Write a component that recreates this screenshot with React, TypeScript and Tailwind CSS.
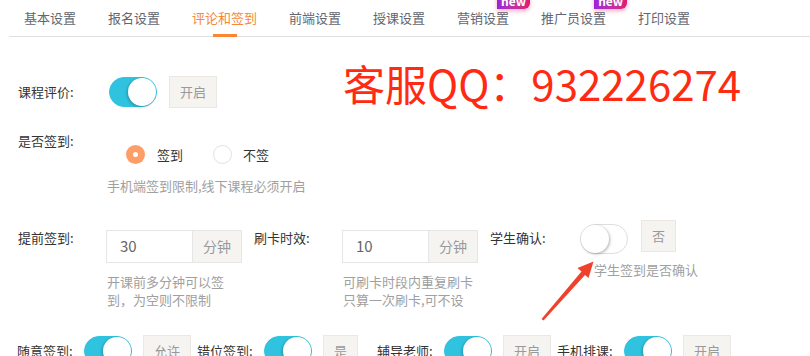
import React from "react";

const tabs = ["基本设置", "报名设置", "评论和签到", "前端设置", "授课设置", "营销设置", "推广员设置", "打印设置"];
const newTabs = ["营销设置", "推广员设置"];

function Toggle({ on }: { on: boolean }) {
  return on ? (
    <div className="relative h-[30px] w-[48px] shrink-0 rounded-full border border-[#2fc3df] bg-[#2fc3df]">
      <div className="absolute right-0 top-0 h-[28px] w-[28px] rounded-full bg-white shadow-[-1px_1px_3px_rgba(0,0,0,0.25)]" />
    </div>
  ) : (
    <div className="relative h-[30px] w-[48px] shrink-0 rounded-full border border-[#dedede] bg-white">
      <div className="absolute left-0 top-0 h-[28px] w-[28px] rounded-full bg-white shadow-[1px_1px_3px_rgba(0,0,0,0.3)]" />
    </div>
  );
}

function Box({ text }: { text: string }) {
  return (
    <div className="flex h-[32px] shrink-0 items-center justify-center border border-[#ebe7e2] bg-[#f6f4f1] px-[10px] text-[13px] text-[#999]">
      {text}
    </div>
  );
}

function MinuteInput({ value }: { value: string }) {
  return (
    <div className="flex h-[33px] w-[136px] border border-[#e6e6e6]">
      <div className="flex flex-1 items-center pl-[13px] text-[15px] text-[#666]">{value}</div>
      <div className="flex w-[49px] items-center justify-center border-l border-[#e6e6e6] bg-[#f6f4f1] text-[14px] text-[#999]">
        分钟
      </div>
    </div>
  );
}

function BottomItem({ label, text }: { label: string; text: string }) {
  return (
    <div className="flex w-[180px] shrink-0 items-center">
      <div className="w-[67px] text-[13px] text-[#333]">{label}</div>
      <Toggle on />
      <div className="ml-[11px]">
        <Box text={text} />
      </div>
    </div>
  );
}

export default function App() {
  return (
    <div
      className="relative h-[356px] w-[810px] overflow-hidden bg-white"
      style={{ fontFamily: '"Noto Sans CJK SC", "Noto Sans", sans-serif' }}
    >
      {/* Tabs */}
      <div className="ml-[9px] flex h-[37px] border-b border-[#e0e0e0]">
        {tabs.map((t) => {
          const active = t === "评论和签到";
          return (
            <div key={t} className="relative flex h-[36px] items-center px-[16px] first:pl-[15px]">
              <span className={`text-[13px] ${active ? "text-[#f5883a]" : "text-[#626670]"}`}>{t}</span>
              {active && (
                <div className="absolute bottom-[-1px] left-1/2 h-[3px] w-[24px] -translate-x-1/2 bg-[#ff8533]" />
              )}
              {newTabs.includes(t) && (
                <div className="absolute right-[-5px] top-[-7px] rounded-md rounded-bl-none bg-gradient-to-r from-[#9a22dc] to-[#e5146f] px-[4px] text-[12px] font-bold leading-[16px] text-white shadow-[0_2px_4px_rgba(229,20,80,0.35)]">
                  new
                </div>
              )}
            </div>
          );
        })}
      </div>

      {/* 课程评价 */}
      <div className="mt-[39px] flex h-[32px] items-center">
        <div className="w-[109px] pl-[18px] text-[13px] text-[#333]">课程评价:</div>
        <Toggle on />
        <div className="ml-[12px]">
          <Box text="开启" />
        </div>
      </div>

      {/* 是否签到 */}
      <div className="mt-[24px] flex">
        <div className="w-[106px] pl-[18px] text-[13px] leading-[18px] text-[#333]">是否签到:</div>
        <div className="pt-[13px]">
          <div className="ml-[20px] flex h-[19px] items-center">
            <div className="flex h-[19px] w-[19px] items-center justify-center rounded-full bg-[#ff9d66]">
              <div className="h-[5px] w-[5px] rounded-full bg-white" />
            </div>
            <span className="ml-[12px] text-[13px] text-[#333]">签到</span>
            <div className="ml-[30px] h-[19px] w-[19px] rounded-full border border-[#dfe2e5] bg-white" />
            <span className="ml-[11px] text-[13px] text-[#333]">不签</span>
          </div>
          <div className="ml-[1px] mt-[13px] text-[13px] leading-[18px] text-[#a0a0a0]">
            手机端签到限制,线下课程必须开启
          </div>
        </div>
      </div>

      {/* 提前签到 / 刷卡时效 / 学生确认 */}
      <div className="mt-[25px] flex items-start">
        <div className="mt-[9px] w-[106px] pl-[18px] text-[13px] leading-[18px] text-[#333]">提前签到:</div>
        <div className="mt-[10px]">
          <MinuteInput value="30" />
          <div className="ml-[1px] mt-[10px] text-[13px] leading-[18px] text-[#a0a0a0]">
            开课前多分钟可以签
            <br />
            到，为空则不限制
          </div>
        </div>
        <div className="ml-[12px] mt-[9px] w-[88px] text-[13px] leading-[18px] text-[#333]">刷卡时效:</div>
        <div className="mt-[10px]">
          <MinuteInput value="10" />
          <div className="ml-[1px] mt-[10px] text-[13px] leading-[18px] text-[#a0a0a0]">
            可刷卡时段内重复刷卡
            <br />
            只算一次刷卡,可不设
          </div>
        </div>
        <div className="ml-[12px] mt-[9px] w-[90px] text-[13px] leading-[18px] text-[#333]">学生确认:</div>
        <div className="mt-[4px] w-[48px] shrink-0">
          <Toggle on={false} />
          <div className="ml-[14px] mt-[7px] whitespace-nowrap text-[13px] leading-[18px] text-[#a0a0a0]">
            学生签到是否确认
          </div>
        </div>
        <div className="ml-[13px]">
          <Box text="否" />
        </div>
      </div>

      {/* bottom row */}
      <div className="mt-[26px] flex pl-[17px]">
        <BottomItem label="随意签到:" text="允许" />
        <BottomItem label="错位签到:" text="是" />
        <BottomItem label="辅导老师:" text="开启" />
        <BottomItem label="手机排课:" text="开启" />
      </div>

      {/* overlay: customer service text */}
      <div className="absolute left-[343px] top-[62px] whitespace-nowrap text-[42px] leading-none text-[#ff2a12]">
        客服QQ：932226274
      </div>

      {/* overlay: red arrow */}
      <svg className="absolute left-0 top-0" width="810" height="356" viewBox="0 0 810 356">
        <polygon
          points="541.5,319 581.5,271.5 577.5,268 593.5,261.5 588.5,278 585,275 543.5,320.5"
          fill="#f0412c"
        />
      </svg>
    </div>
  );
}
